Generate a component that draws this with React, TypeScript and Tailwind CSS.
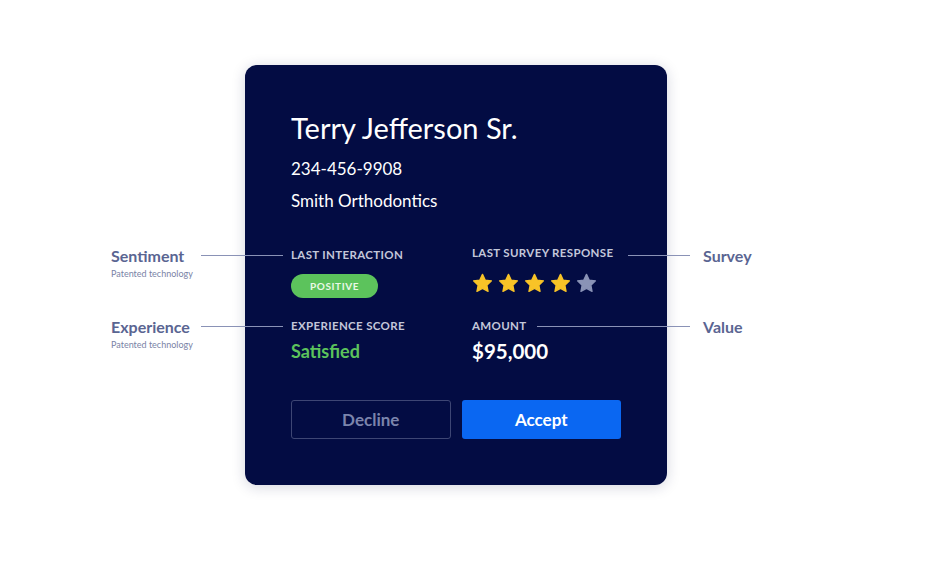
function Star({ filled }: { filled: boolean }) {
  return (
    <svg width="21" height="20" viewBox="0 0 24 23" className="block">
      <path
        d="M12 1.5l3.1 6.6 7.2.9-5.3 5 1.4 7.1L12 17.6l-6.4 3.5 1.4-7.1-5.3-5 7.2-.9z"
        fill={filled ? "#f8c327" : "#8a93b6"}
        stroke={filled ? "#f8c327" : "#8a93b6"}
        strokeWidth="1.5"
        strokeLinejoin="round"
      />
    </svg>
  );
}

function Callout({
  title,
  sub,
  className,
}: {
  title: string;
  sub?: string;
  className: string;
}) {
  return (
    <div className={"absolute " + className}>
      <div className="text-[16px] leading-[18px] font-bold text-[#5a6592]">{title}</div>
      {sub && (
        <div className="mt-[3px] text-[9px] leading-[12px] text-[#7a83a6]">{sub}</div>
      )}
    </div>
  );
}

export default function App() {
  const label = "text-[11.5px] leading-[14px] font-bold tracking-[0.03em] text-[#c3c7da]";

  return (
    <div
      className="w-[936px] h-[564px] bg-white pl-[245px] pt-[65px]"
      style={{ fontFamily: "Lato, 'Open Sans', sans-serif" }}
    >
      <div className="relative w-[422px] rounded-[12px] bg-[#030c43] pt-[46px] pb-[46px] pl-[46px] pr-[46px] shadow-[0_2px_14px_rgba(20,30,80,0.18)]">
        <h1 className="text-[29px] leading-[34px] text-white">Terry Jefferson Sr.</h1>
        <div className="mt-[12px] text-[17px] leading-[24px] text-white">234-456-9908</div>
        <div className="mt-[8px] text-[17px] leading-[24px] text-white">Smith Orthodontics</div>

        <div className="mt-[35px] grid grid-cols-[181px_1fr]">
          <div>
            <div className={label}>LAST INTERACTION</div>
            <div className="mt-[12px] flex h-[24px] w-[87px] items-center justify-center rounded-full bg-[#5cc35c] text-[10px] font-bold tracking-[0.06em] text-[#e9f8e6]">
              POSITIVE
            </div>
          </div>
          <div className="-mt-[2px]">
            <div className={label}>LAST SURVEY RESPONSE</div>
            <div className="mt-[13px] flex gap-[5px]">
              <Star filled />
              <Star filled />
              <Star filled />
              <Star filled />
              <Star filled={false} />
            </div>
          </div>

          <div className="mt-[21px]">
            <div className={label}>EXPERIENCE SCORE</div>
            <div className="mt-[6px] text-[18px] leading-[24px] font-bold text-[#5cc35c]">Satisfied</div>
          </div>
          <div className="mt-[21px]">
            <div className={label}>AMOUNT</div>
            <div className="mt-[6px] text-[20.5px] leading-[24px] font-bold text-white">$95,000</div>
          </div>
        </div>

        <div className="mt-[37px] grid grid-cols-2 gap-[11px]">
          <button className="h-[39px] rounded-[3px] border border-[#3e4674] text-[17px] font-bold text-[#7b84ac]">
            Decline
          </button>
          <button className="h-[39px] rounded-[3px] bg-[#0a67f2] text-[17px] font-bold text-white">
            Accept
          </button>
        </div>

        <div className="absolute left-[-44px] top-[190px] h-px w-[82px] bg-[#8a92b6]" />
        <div className="absolute left-[-44px] top-[261px] h-px w-[82px] bg-[#8a92b6]" />
        <div className="absolute left-[383px] top-[190px] h-px w-[62px] bg-[#8a92b6]" />
        <div className="absolute left-[292px] top-[261px] h-px w-[153px] bg-[#8a92b6]" />

        <Callout className="left-[-134px] top-[182px]" title="Sentiment" sub="Patented technology" />
        <Callout className="left-[-134px] top-[253px]" title="Experience" sub="Patented technology" />
        <Callout className="left-[458px] top-[182px]" title="Survey" />
        <Callout className="left-[458px] top-[253px]" title="Value" />
      </div>
    </div>
  );
}
